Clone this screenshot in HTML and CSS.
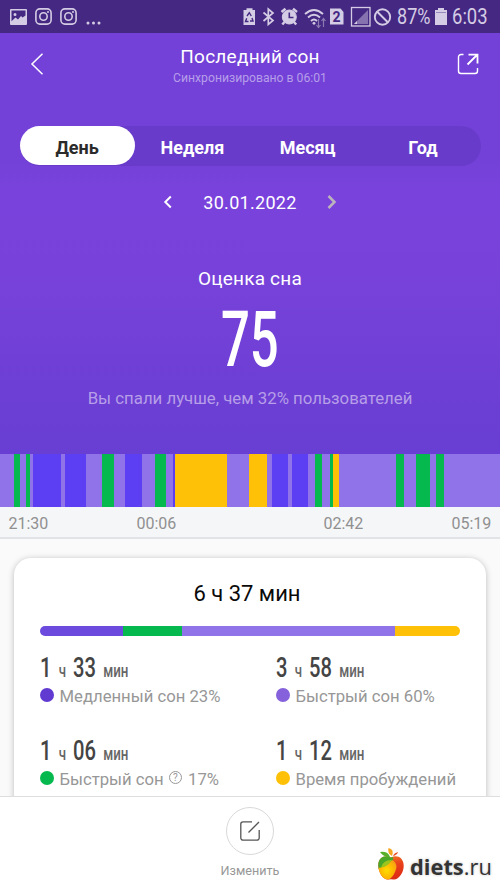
FILE: index.html
```html
<!DOCTYPE html>
<html lang="ru">
<head>
<meta charset="utf-8">
<title>Последний сон</title>
<link rel="stylesheet" href="styles.css">
</head>
<body>
<div class="screen">
  <header class="hero">
    <div class="status">
      <div class="status-left">
        <svg width="17" height="16" viewBox="0 0 17 16"><path fill="currentColor" fill-rule="evenodd" d="M1 0h15a1 1 0 0 1 1 1v14a1 1 0 0 1-1 1H1a1 1 0 0 1-1-1V1a1 1 0 0 1 1-1zm.5 1.500v10.700l4-3.700 2.500 2 3-3.500 1.500 1.500 3-2V1.500zM5 4a1.500 1.500 0 1 1 0 3 1.500 1.500 0 0 1 0-3z"/></svg>
        <svg width="17" height="17" viewBox="0 0 17 17" fill="none" stroke="currentColor"><rect x=".9" y=".9" width="15.200" height="15.200" rx="4" stroke-width="1.600"/><circle cx="8.500" cy="8.500" r="3.700" stroke-width="1.600"/><circle cx="13" cy="4" r=".7"/></svg>
        <svg width="17" height="17" viewBox="0 0 17 17" fill="none" stroke="currentColor"><rect x=".9" y=".9" width="15.200" height="15.200" rx="4" stroke-width="1.600"/><circle cx="8.500" cy="8.500" r="3.700" stroke-width="1.600"/><circle cx="13" cy="4" r=".7"/></svg>
        <svg class="dots" width="15" height="4" viewBox="0 0 15 4" fill="currentColor"><circle cx="2" cy="2" r="1.500"/><circle cx="7.500" cy="2" r="1.500"/><circle cx="13" cy="2" r="1.500"/></svg>
      </div>
      <svg class="status-icons" width="154" height="24" viewBox="240 5 154 24" fill="none" stroke="currentColor">
        <path fill="currentColor" stroke="none" d="M243.500 10h3V8.300h6V10h2.500v15h-11.500z"/>
        <path class="cut" stroke-width="1.400" d="M247 16l2.300-3.300 2 3.300M252 18l1 3h-3M248.500 21.500h-3l1.200-3.300"/>
        <path stroke-width="1.700" d="M263.500 12.500l9.500 8-4.700 4V9l4.700 4-9.500 8"/>
        <circle cx="289.300" cy="17" r="7" fill="currentColor"/>
        <path stroke-width="2.500" d="M281.500 12l4-3.200M297 12l-4-3.200M284.500 22l-2.200 2.500M294 22l2.200 2.500"/>
        <path class="cut" stroke-width="1.600" d="M289.300 12.500V17.500h4.200"/>
        <path stroke-width="1.900" d="M305 14q9-8 18 0M308 17.500q6-5.500 12 0M311 21q3-2.800 6 0"/>
        <circle cx="314" cy="23.300" r="1.400" fill="currentColor" stroke="none"/>
        <path opacity=".5" stroke-width="1.200" d="M318.500 19v8.500M316.500 25l2 2.500 2-2.500M323.500 27v-8.500M321.500 21l2-2.500 2 2.500"/>
        <path fill="currentColor" stroke="none" d="M330 8.500h10.500l3 3.500V24.500H330z"/>
        <text class="sim" x="332.600" y="22">2</text>
        <rect x="351.500" y="7.500" width="18.500" height="18.500" stroke-width="1.300"/>
        <path fill="currentColor" stroke="none" opacity=".45" d="M368 10v14h-14z"/>
        <path fill="currentColor" stroke="none" d="M357 21v3h-3z"/>
        <circle cx="382.500" cy="17" r="7.700" stroke-width="1.900"/><path stroke-width="1.900" d="M377 11.500l11 11"/>
      </svg>
      <span class="percent">87%</span>
      <svg class="battery" width="12" height="17" viewBox="0 0 12 17" fill="currentColor"><path d="M0 2h3V0h6v2h3v15H0z"/><path class="cut" stroke-width=".7" d="M1 4.500h10" opacity=".6"/></svg>
      <span class="clock">6:03</span>
    </div>

    <div class="titlebar">
      <svg class="back" width="14" height="24" viewBox="0 0 14 24"><path d="M12.500 1.800L2 12l10.500 10.200" fill="none" stroke="#fff" stroke-width="1.500"/></svg>
      <div class="titles">
        <h1>Последний сон</h1>
        <p>Синхронизировано в 06:01</p>
      </div>
      <svg class="share" width="22" height="22" viewBox="0 0 22 22" fill="none" stroke="#fff" stroke-width="1.400"><path d="M6.500 1.500H4a2.500 2.500 0 0 0-2.500 2.500v14A2.500 2.500 0 0 0 4 20.500h14a2.500 2.500 0 0 0 2.500-2.500v-3"/><path stroke-width="1.800" d="M10.500 11.500L20 2M11.500 1.600h9v9"/></svg>
    </div>

    <nav class="tabs">
      <span class="tab active">День</span><span class="tab">Неделя</span><span class="tab">Месяц</span><span class="tab">Год</span>
    </nav>

    <div class="date">
      <svg width="10" height="14" viewBox="0 0 10 14"><path d="M7.800 1.500L2.300 7l5.500 5.500" fill="none" stroke="#fff" stroke-width="2"/></svg>
      <span>30.01.2022</span>
      <svg width="10" height="14" viewBox="0 0 10 14"><path d="M1.500 1L7.500 7l-6 6" fill="none" stroke="#bcb3bc" stroke-width="2.500"/></svg>
    </div>

    <h2>Оценка сна</h2>
    <div class="score"><span>75</span></div>
    <p class="compare">Вы спали лучше, чем 32% пользователей</p>
  </header>

  <div class="phases">
    <i class="rem" style="width:13.5px"></i><i class="green" style="width:6.5px"></i><i class="rem" style="width:6px"></i><i class="green" style="width:3.5px"></i><i class="rem" style="width:3px"></i><i class="deep" style="width:28px"></i><i class="rem" style="width:4.500px"></i><i class="deep" style="width:21px"></i><i class="rem" style="width:16px"></i><i class="green" style="width:12px"></i><i class="rem" style="width:11px"></i><i class="deep" style="width:16.5px"></i><i class="rem" style="width:13px"></i><i class="green" style="width:11px"></i><i class="rem" style="width:7.5px"></i><i class="deep" style="width:2px"></i><i class="wake" style="width:52px"></i><i class="rem" style="width:21.500px"></i><i class="wake" style="width:18.5px"></i><i class="rem" style="width:5px"></i><i class="deep" style="width:16px"></i><i class="rem" style="width:4px"></i><i class="deep" style="width:15.5px"></i><i class="rem" style="width:7.5px"></i><i class="green" style="width:6.5px"></i><i class="rem" style="width:8px"></i><i class="green" style="width:3.5px"></i><i class="wake" style="width:6px"></i><i class="rem" style="width:56.500px"></i><i class="green" style="width:8px"></i><i class="rem" style="width:12.500px"></i><i class="green" style="width:14px"></i><i class="rem" style="width:6px"></i><i class="green" style="width:8px"></i><i class="rem rest"></i>
  </div>
  <div class="axis"><span>21:30</span><span>00:06</span><span>02:42</span><span>05:19</span></div>

  <main class="content">
    <section class="card">
      <h3>6 ч 37 мин</h3>
      <div class="share-bar">
        <i class="deep" style="width:83px"></i><i class="green" style="width:59px"></i><i class="rem" style="width:213px"></i><i class="wake" style="width:65px"></i>
      </div>
      <div class="stats">
        <div class="stat">
          <div class="time"><b>1</b> <small>ч</small> <b>33</b> <small>мин</small></div>
          <div class="label"><i class="dot deep"></i>Медленный сон 23%</div>
        </div>
        <div class="stat">
          <div class="time"><b>3</b> <small>ч</small> <b>58</b> <small>мин</small></div>
          <div class="label"><i class="dot rem"></i>Быстрый сон 60%</div>
        </div>
        <div class="stat">
          <div class="time"><b>1</b> <small>ч</small> <b>06</b> <small>мин</small></div>
          <div class="label"><i class="dot green"></i>Быстрый сон <span class="help">?</span> 17%</div>
        </div>
        <div class="stat">
          <div class="time"><b>1</b> <small>ч</small> <b>12</b> <small>мин</small></div>
          <div class="label"><i class="dot wake"></i>Время пробуждений</div>
        </div>
      </div>
    </section>
  </main>

  <footer class="bottom">
    <div class="edit">
      <svg width="20" height="20" viewBox="0 0 20 20" fill="none" stroke="#555" stroke-width="1.300"><path d="M12 .8H3A2.200 2.200 0 0 0 .8 3v14A2.200 2.200 0 0 0 3 19.200h14a2.200 2.200 0 0 0 2.200-2.200V9M8.500 11.500L19 1"/></svg>
    </div>
    <span class="edit-label">Изменить</span>
    <div class="brand">
      <svg width="28" height="34" viewBox="0 0 28 34">
        <defs>
          <linearGradient id="red" x1="0" y1="0" x2=".2" y2="1"><stop offset="0" stop-color="#f58a20"/><stop offset=".5" stop-color="#e8401c"/><stop offset="1" stop-color="#dd2c14"/></linearGradient>
          <radialGradient id="gold"><stop offset="0" stop-color="#ffdc00"/><stop offset=".65" stop-color="#ffb900"/><stop offset="1" stop-color="#f8a512"/></radialGradient>
          <clipPath id="fruit"><path d="M14 10.500C8 7.500 1 10.500 1.300 18.500 1.500 26 6 33 11.500 32.500q2.500-.7 5 0C22 33 27 25 26.700 18.500 26.500 10.500 20 7.500 14 10.500z"/></clipPath>
        </defs>
        <g clip-path="url(#fruit)"><path fill="url(#red)" d="M0 7h28v27H0z"/><path fill="#49a829" d="M0 7h13q4 3 3 7L8 22H0z"/><path fill="url(#gold)" d="M0 21Q9 21 15 13q7 4 3 12-3 7-9 9L0 30z"/><path fill="#9cc61e" d="M4 20.500Q6 13 14.500 13 12 19 4 20.500z"/></g>
        <path fill="#58af2c" d="M3 5q8-1 10 5-7 0-10-5z"/><path fill="#f7a51c" d="M11.500 1q6 1 3.500 8-5-3-3.500-8z"/><path fill="#e74b20" d="M16 9q1-3 5-4-1 3-5 4z"/>
      </svg>
      <span class="brand-name"><b>diets</b>.ru</span>
    </div>
  </footer>
</div>
</body>
</html>
```

FILE: styles.css
```css
* { box-sizing: border-box; }
body, h1, h2, h3, p { margin: 0; font-weight: 400; }
body { font-family: Roboto, "Noto Sans", sans-serif; background: #fafafa; }
svg { display: block; flex: none; }
i { display: block; flex: none; }

.screen { width: 500px; height: 889px; display: flex; flex-direction: column; overflow: hidden; }

.hero {
  height: 454px; flex: none; color: #fff; text-align: center;
  background: linear-gradient(#7341d8 0, #7341d8 160px, #7942dc 190px, #7842da 270px, #693ed2 440px, #693ed2 100%);
}

.status { height: 33px; background: #452882; color: #d4cce4; display: flex; align-items: center; padding: 0 11px 0 10px; }
.status-left { display: flex; align-items: center; gap: 8px; }
.status-left .dots { margin: 13px 0 0 1px; }
.status-icons { margin-left: auto; }
.cut { stroke: #452882; fill: none; }
.sim { font: 700 14px Roboto, sans-serif; fill: #452882; stroke: none; }
.percent, .clock { font-size: 21.500px; line-height: 34px; padding-top: 1px; white-space: nowrap; }
.percent { width: 34px; margin-left: 3px; transform: scaleX(.84); transform-origin: left; }
.battery { margin-left: 4px; }
.clock { width: 37px; margin-left: 5px; transform: scaleX(.86); transform-origin: left; }

.titlebar { height: 93px; display: flex; align-items: flex-start; padding: 0 21px 0 30px; }
.back { margin-top: 19px; }
.titles { flex: 1; padding: 12px 1px 0 0; }
.titles h1 { font-size: 19px; line-height: 24px; letter-spacing: .25px; }
.titles p { font-size: 12.200px; line-height: 19px; color: #b69ee9; }
.share { margin-top: 20px; }

.tabs { height: 40px; margin: 0 19.500px; display: flex; border-radius: 20px; background: #693bca; }
.tab { flex: 1; font-size: 18px; font-weight: 700; line-height: 43px; }
.tab.active { height: 39px; border-radius: 20px; background: #fff; color: #2b2b2b; }

.date { height: 72px; display: flex; align-items: center; justify-content: center; gap: 30px; font-size: 18px; letter-spacing: .3px; }

.hero h2 { margin-top: 29px; font-size: 19px; line-height: 24px; letter-spacing: .2px; }
.score { height: 97px; display: flex; justify-content: center; align-items: center; }
.score span { font-size: 77px; line-height: 97px; font-weight: 500; transform: translateY(1px) scaleX(.66); }
.compare { font-size: 16.800px; line-height: 20px; color: #b69ee8; }

.phases { display: flex; height: 53px; flex: none; }
.phases .rest { flex: 1; }
.deep { background: #5d3ff3; }
.rem { background: #9073e9; }
.green { background: #06b94f; }
.wake { background: #ffc107; }

.axis {
  height: 32px; flex: none; padding: 0 8.500px; background: #f5f6f8; border-bottom: 2px solid #e1e3e7;
  display: grid; grid-template-columns: 128px 187px 128px auto; line-height: 34px; font-size: 16px; color: #909090;
}

.content { flex: 1; min-height: 0; overflow: hidden; padding: 19px 14px 0; background: #fafafa; }
.card { height: 300px; padding: 21px 26px 0; border-radius: 17px; background: #fff; box-shadow: 0 1px 6px rgba(0, 0, 0, .25); }
.card h3 { font-size: 22px; line-height: 30px; text-align: center; color: #0a0a0a; padding-right: 6px; }
.share-bar { display: flex; height: 10px; margin-top: 17px; border-radius: 5px; overflow: hidden; }
.share-bar .deep { background: #6b4add; }

.stats { display: grid; grid-template-columns: 236px auto; grid-auto-rows: 83px; padding-top: 16px; }
.time { height: 32px; line-height: 32px; font-size: 28px; color: #444; white-space: nowrap; transform: scaleX(.72); transform-origin: left; word-spacing: 3px; }
.time b { font-weight: 500; }
.time small { font-size: 18.500px; font-weight: 500; color: #666; }
.label { display: flex; align-items: center; height: 24px; font-size: 16.700px; color: #979797; white-space: pre; }
.dot { width: 14px; height: 14px; border-radius: 50%; margin: 0 5.500px 2px 0; }
.dot.deep { background: #613bd1; }
.dot.rem { background: #8562db; }
.help { width: 13px; height: 13px; border: 1px solid #979797; border-radius: 50%; font-size: 10px; line-height: 11px; text-align: center; margin: 0 2px 3px 1px; }

.bottom { position: relative; height: 93px; flex: none; border-top: 1px solid #dedede; background: #fff; display: flex; flex-direction: column; align-items: center; padding-top: 10px; }
.edit { width: 48px; height: 48px; border: 1px solid #d9d9d9; border-radius: 50%; display: flex; align-items: center; justify-content: center; }
.edit-label { margin-top: 7px; font-size: 12.600px; line-height: 17px; color: #979797; }
.brand { position: absolute; right: 8px; bottom: 7px; display: flex; align-items: center; gap: 5px; }
.brand-name { font: 21px/30px "Open Sans", sans-serif; color: #333; text-shadow: 0 0 3px #bbb; width: 82px; padding-top: 6px; white-space: nowrap; transform: scaleX(1.04); transform-origin: left; }
.brand-name b { font-weight: 700; }
```
